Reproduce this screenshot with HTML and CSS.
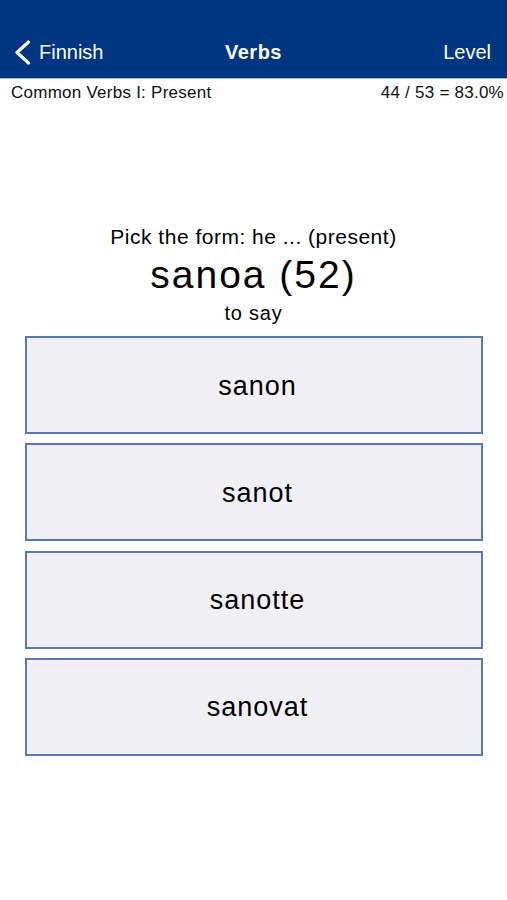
FILE: index.html
```html
<!DOCTYPE html>
<html>
<head>
<meta charset="utf-8">
<link rel="stylesheet" href="styles.css">
</head>
<body>
<header class="nav">
  <div class="nav-left">
    <svg class="chev" width="17" height="25" viewBox="0 0 17 25"><path d="M14.5 2 L3 12.5 L14.5 23" fill="none" stroke="#fff" stroke-width="3.2" stroke-linecap="round" stroke-linejoin="round"/></svg>
    <span>Finnish</span>
  </div>
  <div class="nav-title">Verbs</div>
  <div class="nav-right">Level</div>
</header>
<div class="sub">
  <span>Common Verbs I: Present</span>
  <span>44 / 53 = 83.0%</span>
</div>
<main class="quiz">
  <div class="prompt">Pick the form: he ... (present)</div>
  <div class="word">sanoa (52)</div>
  <div class="meaning">to say</div>
  <div class="options">
    <div class="opt">sanon</div>
    <div class="opt">sanot</div>
    <div class="opt">sanotte</div>
    <div class="opt">sanovat</div>
  </div>
</main>
</body>
</html>
```
FILE: styles.css
```css
* { box-sizing: border-box; }
html, body { margin: 0; padding: 0; background: #fff; }
body { font-family: "Liberation Sans", Arial, sans-serif; color: #000; width: 507px; height: 900px; overflow: hidden; }
.nav {
  background: #003681;
  height: 79px;
  padding: 26px 16px 0 14px;
  display: flex;
  align-items: center;
  justify-content: space-between;
  color: #fff;
  border-bottom: 1px solid #8fb4e0;
  position: relative;
}
.nav-left { display: flex; align-items: center; gap: 8px; font-size: 20px; }
.chev { display: block; }
.nav-title { position: absolute; left: 0; right: 0; top: 26px; bottom: 0; display: flex; align-items: center; justify-content: center; font-weight: bold; font-size: 20px; letter-spacing: 0.5px; pointer-events: none; }
.nav-right { font-size: 20px; }
.sub {
  display: flex; justify-content: space-between;
  padding: 4px 3px 0 11px;
  font-size: 17px;
  letter-spacing: 0.25px;
  color: #111;
}
.quiz { display: flex; flex-direction: column; align-items: center; padding-top: 122px; }
.prompt { font-size: 21px; line-height: 24px; letter-spacing: 0.5px; }
.word { font-size: 39px; line-height: 52px; letter-spacing: 2px; }
.meaning { font-size: 20px; line-height: 24px; letter-spacing: 0.8px; }
.options { display: flex; flex-direction: column; gap: 10px; margin-top: 11px; width: 458px; }
.opt {
  height: 98px;
  background: #efeff4;
  border: 2px solid #5b79aa;
  display: flex; align-items: center; justify-content: center;
  padding: 2px 0 0 8px;
  font-size: 27px;
  letter-spacing: 1px;
}
.opt + .opt { margin-top: -0.7px; }
```
